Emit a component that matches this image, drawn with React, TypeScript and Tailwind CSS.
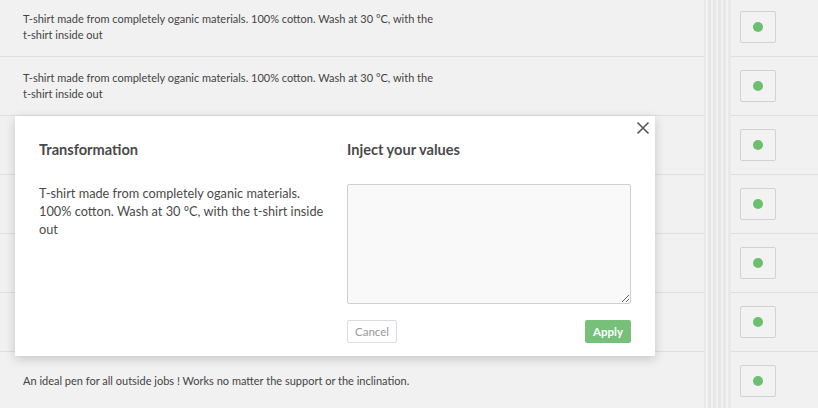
import React from "react";

const tshirt =
  "T-shirt made from completely oganic materials. 100% cotton. Wash at 30 °C, with the t-shirt inside out";
const pen =
  "An ideal pen for all outside jobs ! Works no matter the support or the inclination.";

const rows = [tshirt, tshirt, tshirt, tshirt, tshirt, tshirt, pen];

function Stripes() {
  return (
    <div className="flex h-full w-[27px] shrink-0">
      <div className="w-[2px] bg-[#e9e9e9]" />
      <div className="w-[2px] bg-[#f3f3f3]" />
      <div className="w-[3px] bg-[#e6e6e6]" />
      <div className="w-[2px] bg-[#f2f2f2]" />
      <div className="w-[3px] bg-[#e7e7e7]" />
      <div className="w-[2px] bg-[#f2f2f2]" />
      <div className="w-[3px] bg-[#e6e6e6]" />
      <div className="w-[2px] bg-[#f2f2f2]" />
      <div className="w-[3px] bg-[#e7e7e7]" />
      <div className="w-[2px] bg-[#f3f3f3]" />
      <div className="w-[3px] bg-[#e9e9e9]" />
    </div>
  );
}

export default function App() {
  return (
    <div
      className="relative h-[408px] w-[818px] overflow-hidden bg-[#f1f1f1] text-[#444]"
      style={{ fontFamily: "Lato, 'Open Sans', sans-serif" }}
    >
      <div className="-mt-[2px] flex h-[420px]">
        <div className="flex w-[704px] shrink-0 flex-col">
          {rows.map((t, i) => (
            <div
              key={i}
              className="flex h-[59px] shrink-0 items-center border-b border-[#dedede] pl-[23px]"
            >
              <p className="max-w-[415px] text-[11px] leading-[16px]">{t}</p>
            </div>
          ))}
        </div>
        <Stripes />
        <div className="flex flex-1 flex-col">
          {rows.map((_, i) => (
            <div
              key={i}
              className="flex h-[59px] shrink-0 items-center border-b border-[#dedede] pl-[9px]"
            >
              <button className="flex h-[32px] w-[36px] items-center justify-center rounded-[2px] border border-[#d2d2d2] bg-[#f2f2f2]">
                <span className="h-[10px] w-[10px] rounded-full bg-[#6dbf70]" />
              </button>
            </div>
          ))}
        </div>
      </div>

      <div className="absolute left-[15px] top-[116px] h-[240px] w-[640px] bg-white px-[24px] pt-[24px] shadow-[0_3px_10px_rgba(0,0,0,0.18)]">
        <button className="absolute right-[5px] top-[5px] flex h-[14px] w-[14px] items-center justify-center">
          <svg width="14" height="14" viewBox="0 0 14 14">
            <path
              d="M1.5 1.5 L12.5 12.5 M12.5 1.5 L1.5 12.5"
              stroke="#555"
              strokeWidth="1.6"
              fill="none"
            />
          </svg>
        </button>
        <div className="grid grid-cols-2 gap-[24px]">
          <div>
            <h2 className="text-[14.6px] font-bold leading-[20px] text-[#4a4a4a]">
              Transformation
            </h2>
            <p className="mt-[24px] w-[305px] text-[12.75px] leading-[18px] text-[#4a4a4a]">
              T-shirt made from completely oganic materials.
              <br />
              100% cotton. Wash at 30 °C, with the t-shirt inside out
            </p>
          </div>
          <div>
            <h2 className="text-[14.6px] font-bold leading-[20px] text-[#4a4a4a]">
              Inject your values
            </h2>
            <textarea className="mt-[24px] block h-[120px] w-full rounded-[2px] border border-[#d0d0d0] bg-[#f9f9f9] outline-none" />
            <div className="mt-[16px] flex items-center justify-between">
              <button className="h-[23px] w-[50px] rounded-[2px] border border-[#dcdcdc] bg-white text-[11.5px] text-[#9a9a9a]">
                Cancel
              </button>
              <button className="h-[23px] w-[46px] rounded-[2px] bg-[#77c07a] text-[11.5px] font-bold text-white">
                Apply
              </button>
            </div>
          </div>
        </div>
      </div>
    </div>
  );
}
